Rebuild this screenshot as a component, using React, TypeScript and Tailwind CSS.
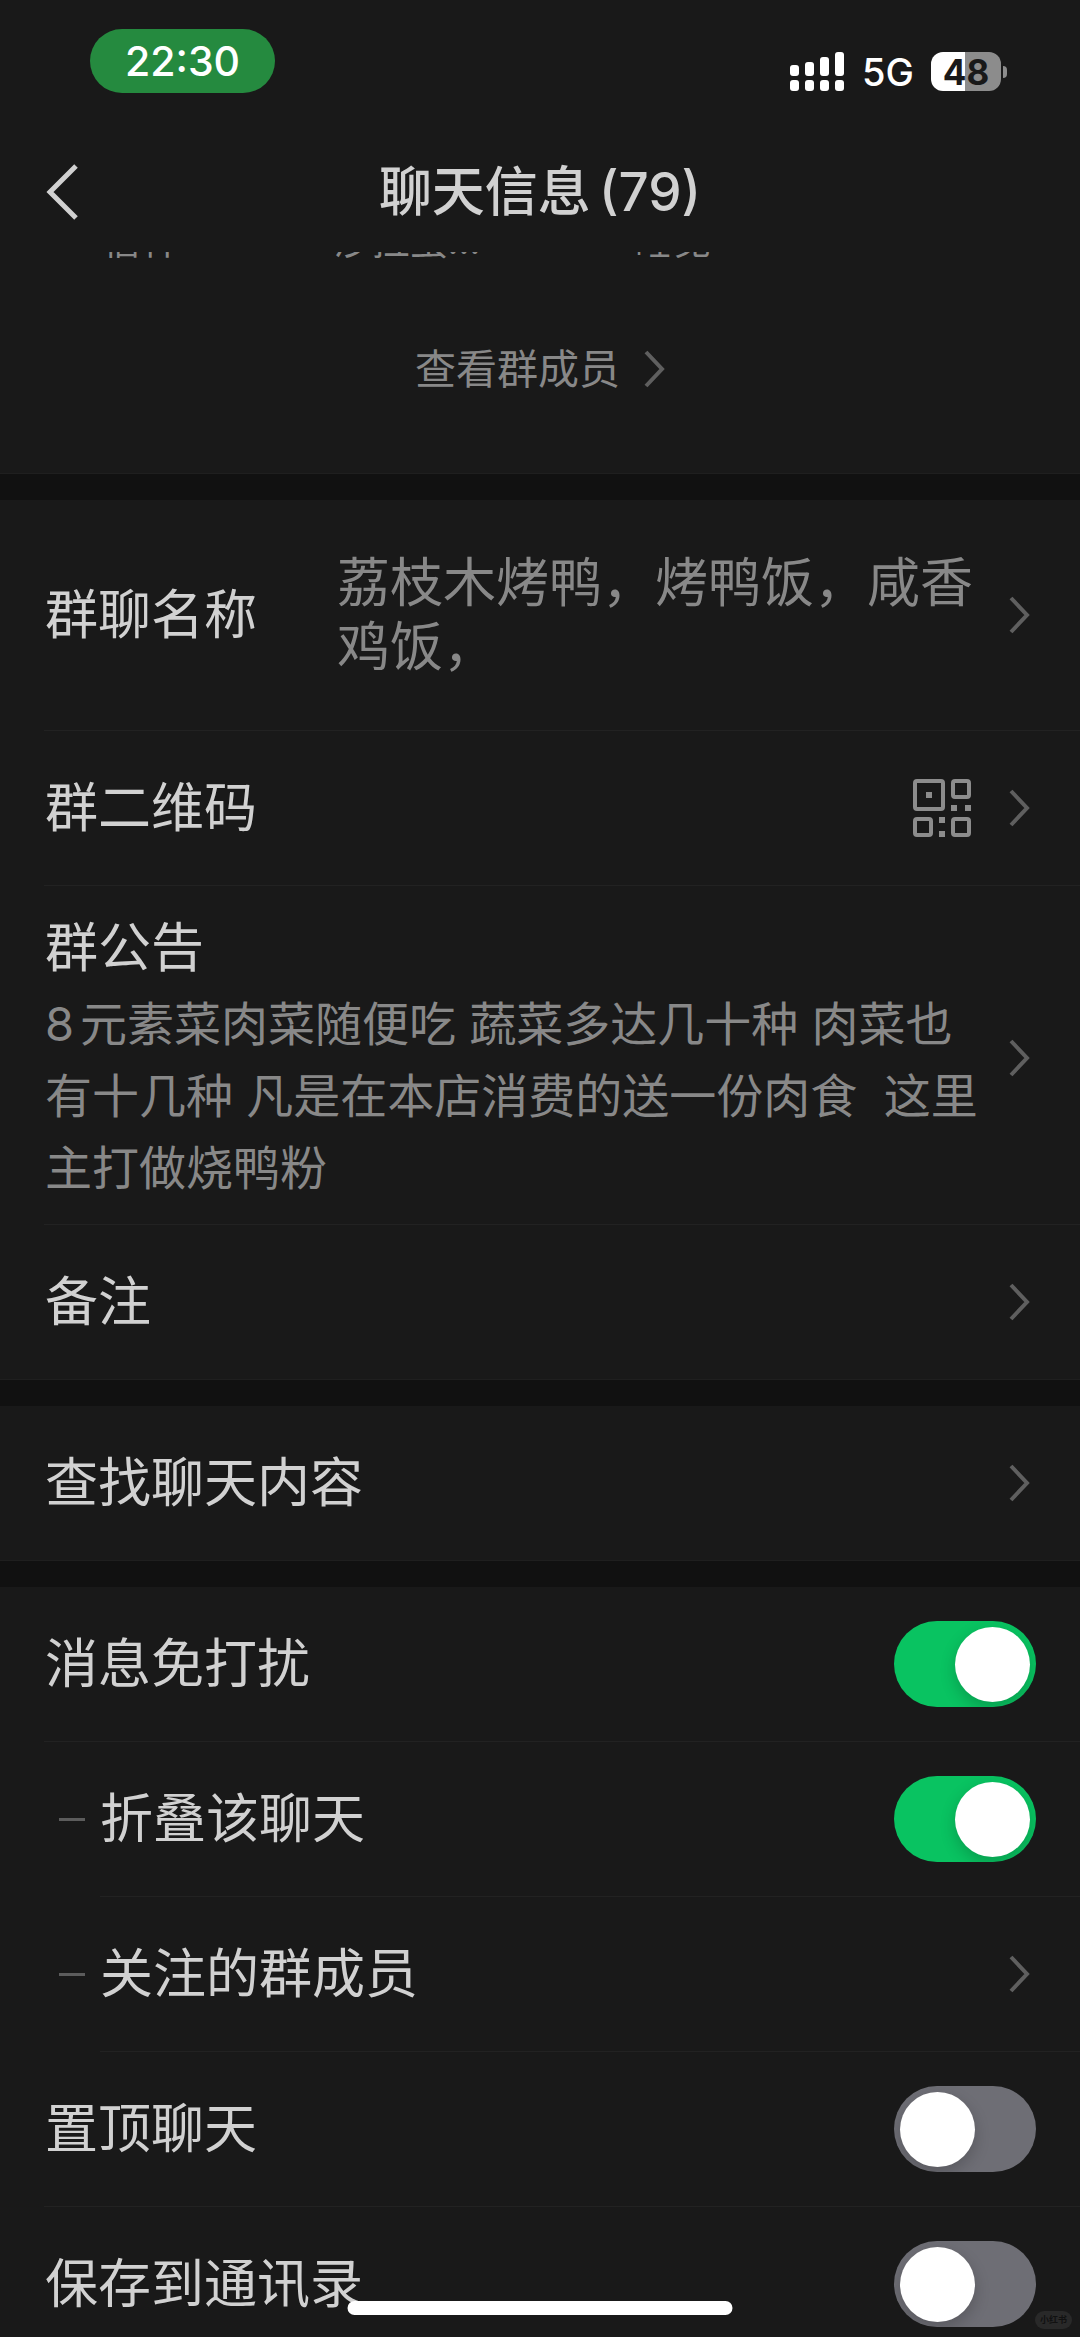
import { useState } from "react";
import type { ReactNode } from "react";

const members = ["信种", "沙拉蛋…", "睡觉"];

export default function App() {
  const [muted, setMuted] = useState(true);
  const [folded, setFolded] = useState(true);
  const [pinned, setPinned] = useState(false);
  const [saved, setSaved] = useState(false);

  return (
    <div className="relative flex h-screen flex-col overflow-hidden bg-[#111111] font-[Inter,'Noto_Sans_CJK_SC',sans-serif] text-[53px] leading-[64px] text-[#d1d1d1]">
      <header className="shrink-0 bg-[#191919]">
        <StatusBar />
        <div className="grid h-[120px] grid-cols-[1fr_auto_1fr] items-center px-[45px]">
          <button type="button" aria-label="返回" className="justify-self-start">
            <svg width="34" height="56" viewBox="0 0 34 56" fill="none" stroke="currentColor" strokeWidth="5">
              <path d="M31 2 5 28l26 26" />
            </svg>
          </button>
          <h1 className="flex gap-2 font-medium">
            <span>聊天信息</span>
            <span>(79)</span>
          </h1>
        </div>
      </header>

      <main className="flex flex-col gap-[26px]">
        <section className="bg-[#191919]">
          {/* last member row, scrolled under the header */}
          <ul className="grid h-3 grid-cols-4 content-end overflow-hidden px-2 text-center text-[38px] leading-[48px] text-[#888888]">
            {members.map((name) => (
              <li key={name}>{name}</li>
            ))}
          </ul>
          <div className="flex h-[210px] items-center justify-center border-b border-[#1f1f1f]">
            <button type="button" className="flex items-center gap-6 text-[41px] text-[#888888]">
              查看群成员
              <Chevron />
            </button>
          </div>
        </section>

        <section className="bg-[#191919]">
          <Row height="h-[230px]">
            <span className="w-[292px] shrink-0">群聊名称</span>
            <span className="mr-6 flex-1 text-[#888888]">荔枝木烤鸭，烤鸭饭，咸香鸡饭，</span>
            <Chevron />
          </Row>
          <Row>
            <span className="mr-auto">群二维码</span>
            <QrIcon />
            <Chevron />
          </Row>
          <Row height="pt-[26px] pb-5">
            <span className="mr-6 flex flex-1 flex-col gap-1 leading-[72px]">
              <span>群公告</span>
              <span className="whitespace-pre-wrap text-[47px] text-[#888888] [text-autospace:normal]">
                {"8元素菜肉菜随便吃 蔬菜多达几十种 肉菜也有十几种 凡是在本店消费的送一份肉食  这里主打做烧鸭粉"}
              </span>
            </span>
            <Chevron />
          </Row>
          <Row last>
            <span className="mr-auto">备注</span>
            <Chevron />
          </Row>
        </section>

        <section className="bg-[#191919]">
          <Row last>
            <span className="mr-auto">查找聊天内容</span>
            <Chevron />
          </Row>
        </section>

        <section className="bg-[#191919]">
          <SwitchRow label="消息免打扰" checked={muted} onChange={setMuted} />
          <SwitchRow label="折叠该聊天" checked={folded} onChange={setFolded} nested />
          <Row nested>
            <span className="mr-auto">关注的群成员</span>
            <Chevron />
          </Row>
          <SwitchRow label="置顶聊天" checked={pinned} onChange={setPinned} />
          <SwitchRow label="保存到通讯录" checked={saved} onChange={setSaved} />
        </section>
      </main>

      <div className="absolute bottom-[22px] left-1/2 h-[14px] w-[385px] -translate-x-1/2 rounded-full bg-white" />
      <div className="absolute right-2 bottom-2 rounded-full bg-[#292929] px-[5px] text-[9px] leading-[18px] font-bold text-[#111111]">
        小红书
      </div>
    </div>
  );
}

function StatusBar() {
  return (
    <div className="flex h-[132px] items-start justify-between pr-[73px] pl-[90px] text-white">
      <div className="mt-[29px] flex h-16 w-[185px] items-center justify-center rounded-full bg-[#258a3f] text-[41px] font-medium">
        22:30
      </div>
      <div className="mt-[52px] flex h-[39px] items-center">
        <svg width="54" height="39" viewBox="0 0 54 39" fill="currentColor" aria-label="信号">
          <rect x="0" y="13" width="9" height="11" rx="3" />
          <rect x="15" y="10" width="9" height="14" rx="3" />
          <rect x="30" y="5" width="9" height="19" rx="3" />
          <rect x="45" y="0" width="9" height="24" rx="3" />
          <rect x="0" y="28" width="9" height="11" rx="3" />
          <rect x="15" y="28" width="9" height="11" rx="3" />
          <rect x="30" y="28" width="9" height="11" rx="3" />
          <rect x="45" y="28" width="9" height="11" rx="3" />
        </svg>
        <span className="ml-[18px] w-[53px] text-[38px] font-medium">5G</span>
        <span className="ml-4 flex h-[39px] w-[70px] items-center justify-center rounded-xl bg-[linear-gradient(to_right,#ffffff_48%,#8c8c8c_48%)] text-[35px] font-bold text-[#191919]">
          48
        </span>
        <span className="ml-[2px] h-3 w-1 rounded-r-full bg-[#8c8c8c]" />
      </div>
    </div>
  );
}

function Divider({ last, nested }: { last?: boolean; nested?: boolean }) {
  if (last) return <div className="h-px bg-[#1f1f1f]" />;
  return <div className={nested ? "ml-[100px] h-px bg-[#222222]" : "ml-11 h-px bg-[#222222]"} />;
}

function Dash() {
  return <span className="mr-[15px] ml-[14px] h-[3px] w-[26px] bg-[#5c5c5c]" />;
}

function Row({
  children,
  height = "h-[154px]",
  last,
  nested,
}: {
  children: ReactNode;
  height?: string;
  last?: boolean;
  nested?: boolean;
}) {
  return (
    <>
      <button type="button" className={`flex w-full items-center pr-[50px] pl-[45px] text-left ${height}`}>
        {nested && <Dash />}
        {children}
      </button>
      <Divider last={last} nested={nested} />
    </>
  );
}

function SwitchRow({
  label,
  checked,
  onChange,
  nested,
}: {
  label: string;
  checked: boolean;
  onChange: (v: boolean) => void;
  nested?: boolean;
}) {
  return (
    <>
      <label className="flex h-[154px] items-center pr-11 pl-[45px]">
        {nested && <Dash />}
        <span className="mr-auto">{label}</span>
        <input
          type="checkbox"
          role="switch"
          checked={checked}
          onChange={(e) => onChange(e.target.checked)}
          className="flex h-[86px] w-[142px] appearance-none items-center overflow-hidden rounded-full bg-[#6e6e75] px-[6px] before:size-[75px] before:rounded-full before:bg-white before:shadow-[0_6px_16px_rgba(0,0,0,0.2)] checked:justify-end checked:bg-[#09c361]"
        />
      </label>
      <Divider nested={nested} />
    </>
  );
}

function Chevron() {
  return (
    <svg
      className="shrink-0 text-[#5f5f5f]"
      width="21"
      height="38"
      viewBox="0 0 21 38"
      fill="none"
      stroke="currentColor"
      strokeWidth="4"
    >
      <path d="M2 2l16 17L2 36" />
    </svg>
  );
}

function QrIcon() {
  return (
    <svg className="mr-[38px] shrink-0 text-[#8c8c8c]" width="58" height="58" viewBox="0 0 58 58" fill="none">
      <g stroke="currentColor" strokeWidth="4">
        <rect x="2" y="2" width="28" height="28" rx="2" />
        <rect x="40" y="2" width="16" height="16" rx="2" />
        <rect x="2" y="40" width="16" height="16" rx="2" />
        <rect x="40" y="40" width="16" height="16" rx="2" />
      </g>
      <g fill="currentColor">
        <rect x="13" y="13" width="6" height="6" />
        <rect x="38" y="26" width="6" height="6" />
        <rect x="52" y="26" width="6" height="6" />
        <rect x="26" y="38" width="6" height="6" />
        <rect x="26" y="52" width="6" height="6" />
      </g>
    </svg>
  );
}
